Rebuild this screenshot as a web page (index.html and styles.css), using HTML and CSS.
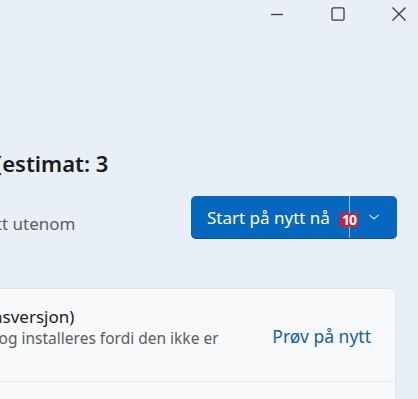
FILE: index.html
```html
<!DOCTYPE html>
<html lang="nb">
<head>
<meta charset="UTF-8">
<meta name="viewport" content="width=device-width, initial-scale=1.0">
<title>Windows Update</title>
<link rel="stylesheet" href="styles.css">
</head>
<body>
  <div class="titlebar">
    <button class="caption" aria-label="Minimer">
      <svg width="14" height="14" viewBox="0 0 14 14"><path d="M1 7.5h12" stroke="#3b3b3b" stroke-width="1.3"/></svg>
    </button>
    <button class="caption" aria-label="Maksimer">
      <svg width="14" height="14" viewBox="0 0 14 14"><rect x="1" y="0.8" width="12" height="12.4" rx="1.5" fill="none" stroke="#3b3b3b" stroke-width="1.3"/></svg>
    </button>
    <button class="caption" aria-label="Lukk">
      <svg width="16" height="16" viewBox="0 0 16 16"><path d="M1.5 1.5l13 13M14.5 1.5l-13 13" stroke="#3b3b3b" stroke-width="1.3"/></svg>
    </button>
  </div>

  <div class="page">
    <div class="status">
      <div class="status-text">
        <h1>Start på nytt kreves (estimat: 3</h1>
        <p>Enheten din vil starte på nytt utenom</p>
      </div>
      <div class="split-button">
        <button class="split-main">Start på nytt nå</button>
        <button class="split-arrow" aria-label="Flere valg">
          <svg width="12" height="8" viewBox="0 0 12 8"><path d="M1.5 1.8l4.5 4.2 4.5-4.2" fill="none" stroke="#cfe2f5" stroke-width="1.1"/></svg>
        </button>
        <span class="badge">10</span>
      </div>
    </div>

    <div class="card">
      <div class="card-row">
        <div class="card-text">
          <div class="card-title">Oppdatering av funksjonsversjon)</div>
          <div class="card-desc">Den kunne ikke lastes ned og installeres fordi den ikke er</div>
        </div>
        <a class="link" href="#">Prøv på nytt</a>
      </div>
      <div class="card-row"></div>
    </div>
  </div>
</body>
</html>
```

FILE: styles.css
```css
body {
  margin: 0;
  height: 399px;
  overflow: hidden;
  background-color: #e9eff6;
  font-family: "Segoe UI", "Noto Sans", sans-serif;
  color: #1b1b1b;
}

.titlebar {
  display: flex;
  justify-content: flex-end;
  margin-right: -11px;
}

.caption {
  width: 61px;
  height: 28px;
  border: none;
  background: none;
  padding: 0;
  display: flex;
  align-items: center;
  justify-content: center;
}

.page {
  margin-left: -221px;
  padding: 120px 21px 0 0;
}

.status {
  display: flex;
  justify-content: space-between;
  align-items: flex-start;
}

.status-text h1 {
  margin: 0;
  font-size: 22px;
  line-height: 30px;
  font-weight: 600;
  white-space: nowrap;
}

.status-text p {
  margin: 34px 0 0;
  font-size: 17px;
  line-height: 24px;
  color: #5d5d5d;
  white-space: nowrap;
}

.split-button {
  position: relative;
  display: flex;
  margin-top: 48px;
  height: 42px;
  border-radius: 5px;
  background-color: #0667be;
  box-shadow: 0 1px 0 #0a4f8f;
}

.split-button button {
  border: none;
  background: none;
  color: #fff;
  font-family: inherit;
  cursor: pointer;
}

.split-main {
  width: 159px;
  padding: 0 0 0 16px;
  text-align: left;
  font-size: 17px;
  border-right: 1px solid #9cc0e3 !important;
}

.split-arrow {
  width: 47px;
  display: flex;
  align-items: center;
  justify-content: center;
}

.badge {
  position: absolute;
  left: 149px;
  top: 17px;
  width: 18px;
  height: 14px;
  background-color: #cf2236;
  color: #fff;
  font-size: 14px;
  font-weight: 700;
  line-height: 14px;
  text-align: center;
  letter-spacing: -1px;
}

.card {
  margin: 50px 1px 0 0;
  background-color: #f8f9fb;
  border: 1px solid #e1e5ea;
  border-radius: 6px;
}

.card-row {
  display: flex;
  align-items: flex-start;
  justify-content: space-between;
  height: 92px;
  padding: 0 24px;
}

.card-row + .card-row {
  border-top: 1px solid #e6e9ec;
}

.card-text {
  padding-top: 17px;
}

.card-title {
  font-size: 17px;
  line-height: 22px;
  white-space: nowrap;
}

.card-desc {
  font-size: 15.5px;
  line-height: 21px;
  color: #5d5d5d;
  white-space: nowrap;
}

.link {
  align-self: center;
  margin-top: 2px;
  font-size: 17.5px;
  color: #1360b2;
  text-decoration: none;
}
```
